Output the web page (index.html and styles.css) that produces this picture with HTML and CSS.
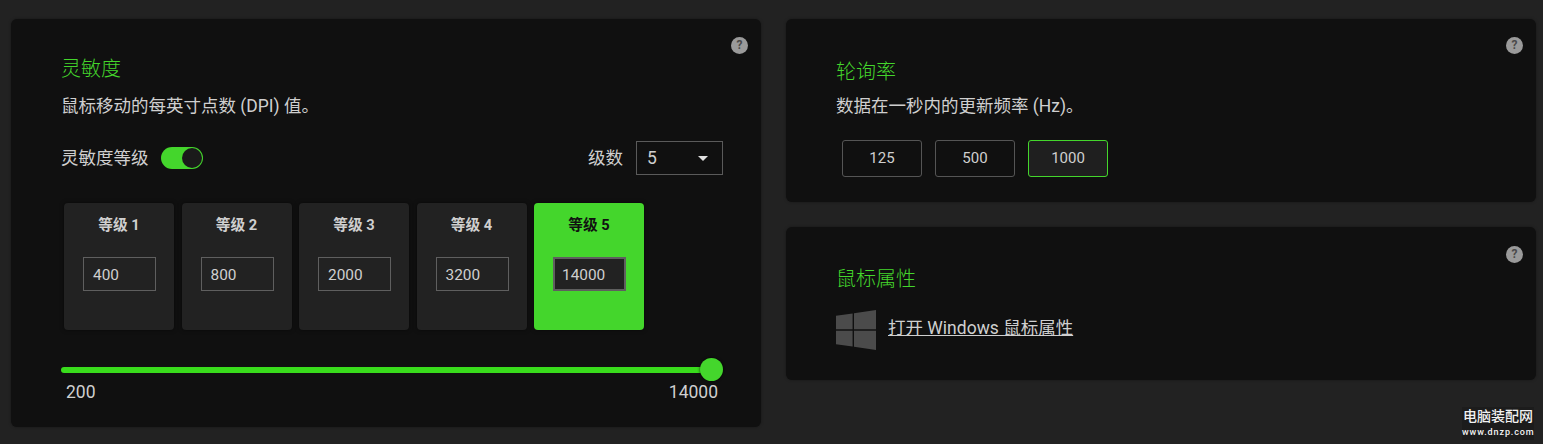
FILE: index.html
```html
<!DOCTYPE html>
<html lang="zh-CN">
<head>
    <meta charset="UTF-8">
    <title>Mouse Performance</title>
    <link rel="stylesheet" href="styles.css">
</head>
<body>
    <div class="layout">
        <!-- Sensitivity -->
        <div class="panel panel-dpi">
            <span class="help">?</span>
            <h2>灵敏度</h2>
            <p class="desc">鼠标移动的每英寸点数 (DPI) 值。</p>
            <div class="stage-row">
                <div class="stage-toggle">
                    <span class="stage-label">灵敏度等级</span>
                    <span class="toggle"><span class="toggle-knob"></span></span>
                </div>
                <div class="stage-count">
                    <span class="stage-label">级数</span>
                    <div class="select">
                        <span>5</span>
                        <span class="caret"></span>
                    </div>
                </div>
            </div>
            <div class="levels">
                <div class="level">
                    <div class="level-name">等级 1</div>
                    <div class="level-input">400</div>
                </div>
                <div class="level">
                    <div class="level-name">等级 2</div>
                    <div class="level-input">800</div>
                </div>
                <div class="level">
                    <div class="level-name">等级 3</div>
                    <div class="level-input">2000</div>
                </div>
                <div class="level">
                    <div class="level-name">等级 4</div>
                    <div class="level-input">3200</div>
                </div>
                <div class="level active">
                    <div class="level-name">等级 5</div>
                    <div class="level-input">14000</div>
                </div>
            </div>
            <div class="slider">
                <div class="slider-track"></div>
                <span class="slider-thumb"></span>
            </div>
            <div class="slider-labels">
                <span>200</span>
                <span>14000</span>
            </div>
        </div>

        <div class="side">
            <!-- Polling rate -->
            <div class="panel panel-poll">
                <span class="help">?</span>
                <h2>轮询率</h2>
                <p class="desc">数据在一秒内的更新频率 (Hz)。</p>
                <div class="rates">
                    <div class="rate">125</div>
                    <div class="rate">500</div>
                    <div class="rate active">1000</div>
                </div>
            </div>

            <!-- Mouse properties -->
            <div class="panel panel-props">
                <span class="help">?</span>
                <h2>鼠标属性</h2>
                <div class="props-link">
                    <svg class="win-logo" viewBox="0 0 40 40" width="40" height="40">
                        <polygon points="0,5.8 16.6,3.4 16.6,19.2 0,19.2"/>
                        <polygon points="18,3.2 40,0 40,19.2 18,19.2"/>
                        <polygon points="0,20.8 16.6,20.8 16.6,36.6 0,34.2"/>
                        <polygon points="18,20.8 40,20.8 40,40 18,36.8"/>
                    </svg>
                    <a href="#">打开 Windows 鼠标属性</a>
                </div>
            </div>
        </div>
    </div>

    <div class="watermark">
        <div class="watermark-name">电脑装配网</div>
        <div class="watermark-url">www.dnzp.com</div>
    </div>
</body>
</html>
```

FILE: styles.css
```css
/* General Styles */
html, body {
    height: 100%;
}
body {
    margin: 0;
    height: 444px;
    overflow: hidden;
    background: #222222;
    color: #cfcfcf;
    font-family: Roboto, "Noto Sans CJK SC", sans-serif;
    font-size: 17.5px;
}
.layout {
    display: flex;
    gap: 25px;
    padding: 19px 7px 0 11px;
}
.panel {
    position: relative;
    box-sizing: border-box;
    width: 750px;
    background: #101010;
    border-radius: 6px;
    box-shadow: 0 0 3px rgba(0, 0, 0, 0.35);
}
.panel h2 {
    margin: 0;
    color: #44d62c;
    font-size: 20px;
    font-weight: 300;
    line-height: 28px;
}
.desc {
    margin: 11px 0 0;
    line-height: 24px;
}
.help {
    position: absolute;
    top: 18px;
    right: 13px;
    width: 17px;
    height: 17px;
    border-radius: 50%;
    background: #9a9a9a;
    color: #4a4a4a;
    font-size: 12px;
    font-weight: 700;
    line-height: 17px;
    text-align: center;
}

/* Sensitivity panel */
.panel-dpi {
    height: 408px;
    padding: 36px 38px 0 50px;
}
.stage-row {
    display: flex;
    justify-content: space-between;
    align-items: center;
    margin-top: 23px;
}
.stage-toggle, .stage-count {
    display: flex;
    align-items: center;
}
.stage-label {
    margin-bottom: 3px;
}
.stage-toggle {
    gap: 12px;
}
.stage-count {
    gap: 13px;
}
.toggle {
    box-sizing: border-box;
    display: flex;
    justify-content: flex-end;
    width: 42px;
    height: 22px;
    padding: 1px;
    background: #44d62c;
    border-radius: 11px;
}
.toggle-knob {
    width: 20px;
    height: 20px;
    background: #1a1a1a;
    border-radius: 50%;
}
.select {
    box-sizing: border-box;
    display: flex;
    justify-content: space-between;
    align-items: center;
    width: 87px;
    height: 34px;
    padding: 0 14px 0 10px;
    border: 1px solid #5a5a5a;
}
.caret {
    width: 0;
    height: 0;
    border-left: 5px solid transparent;
    border-right: 5px solid transparent;
    border-top: 5px solid #e0e0e0;
}
.levels {
    display: flex;
    gap: 7.5px;
    margin: 28px 0 0 3px;
}
.level {
    box-sizing: border-box;
    width: 110px;
    height: 127px;
    padding-top: 11px;
    background: #222222;
    border-radius: 4px;
    box-shadow: 0 0 4px rgba(0, 0, 0, 0.5);
}
.level-name {
    font-size: 14.7px;
    font-weight: 700;
    line-height: 22px;
    text-align: center;
}
.level-input {
    box-sizing: border-box;
    width: 73px;
    height: 34px;
    margin: 21px 0 0 19px;
    padding-left: 9px;
    border: 1px solid #5f5f5f;
    font-size: 15.4px;
    line-height: 34px;
}
.level.active {
    background: #44d62c;
}
.level.active .level-name {
    color: #111111;
}
.level.active .level-input {
    background: #222222;
    border-width: 2px;
    padding-left: 7px;
    line-height: 32px;
}
.slider {
    position: relative;
    margin-top: 37px;
    width: 651px;
}
.slider-track {
    height: 6px;
    background: #39dc1c;
    border-radius: 3px;
}
.slider-thumb {
    position: absolute;
    top: -9px;
    right: -11px;
    width: 23px;
    height: 23px;
    background: #44d62c;
    border-radius: 50%;
    box-shadow: 0 0 3px rgba(0, 0, 0, 0.8);
}
.slider-labels {
    display: flex;
    justify-content: space-between;
    margin: 7px 5px 0 5px;
    line-height: 24px;
}

/* Right column */
.side {
    display: flex;
    flex-direction: column;
    gap: 25px;
}
.panel-poll {
    height: 183px;
    padding: 39px 50px 0;
}
.panel-poll .desc {
    margin-top: 8px;
}
.rates {
    display: flex;
    gap: 13px;
    margin: 22px 0 0 6px;
}
.rate {
    box-sizing: border-box;
    width: 80px;
    height: 37px;
    border: 1px solid #555555;
    border-radius: 3px;
    font-size: 15px;
    line-height: 35px;
    text-align: center;
}
.rate.active {
    background: #1f1f1f;
    border-color: #44d62c;
}
.panel-props {
    height: 153px;
    padding: 38px 50px 0;
}
.panel-props .help {
    top: 19px;
}
.props-link {
    display: flex;
    align-items: center;
    gap: 12px;
    margin-top: 17px;
}
.props-link a {
    margin-bottom: 8px;
    color: #cfcfcf;
    text-decoration: underline;
}
.win-logo {
    fill: #4b4b4b;
}

/* Watermark */
.watermark {
    position: absolute;
    top: 407px;
    left: 1462px;
    width: 72px;
    height: 33px;
    background: #1c1c1c;
    color: #f2f2f2;
    text-align: center;
}
.watermark-name {
    font-size: 14px;
    font-weight: 500;
    line-height: 18px;
}
.watermark-url {
    font-size: 9px;
    font-weight: 500;
    letter-spacing: 0.9px;
    line-height: 14px;
    white-space: nowrap;
}
```
